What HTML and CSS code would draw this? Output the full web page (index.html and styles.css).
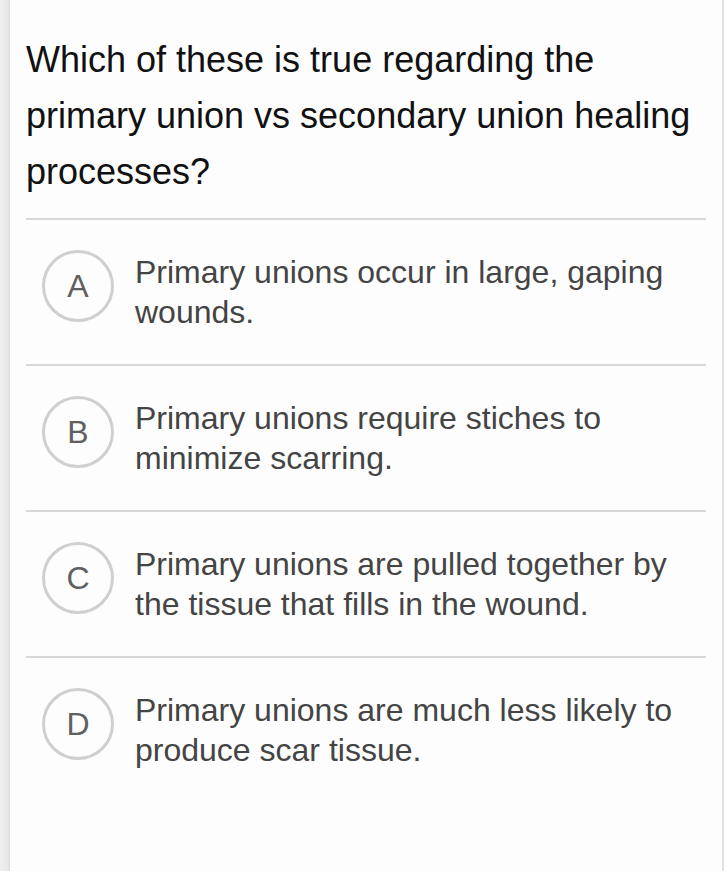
FILE: index.html
```html
<!DOCTYPE html>
<html lang="en">
<head>
<meta charset="utf-8">
<title>Question</title>
<link rel="stylesheet" href="styles.css">
</head>
<body>
<main class="page">
  <h1 class="question">Which of these is true regarding the primary union vs secondary union healing processes?</h1>
  <ul class="options">
    <li class="option">
      <span class="badge">A</span>
      <span class="answer">Primary unions occur in large, gaping wounds.</span>
    </li>
    <li class="option">
      <span class="badge">B</span>
      <span class="answer">Primary unions require stiches to minimize scarring.</span>
    </li>
    <li class="option">
      <span class="badge">C</span>
      <span class="answer">Primary unions are pulled together by the tissue that fills in the wound.</span>
    </li>
    <li class="option">
      <span class="badge">D</span>
      <span class="answer">Primary unions are much less likely to produce scar tissue.</span>
    </li>
  </ul>
</main>
</body>
</html>
```

FILE: styles.css
```css
html, body {
  margin: 0;
  padding: 0;
}

body {
  min-height: 100vh;
  font-family: "Liberation Sans", Arial, Helvetica, sans-serif;
  background: linear-gradient(to right,
    #efefef 0,
    #e6e6e6 8px,
    #dcdcdc 10px,
    #fdfdfd 10px,
    #fdfdfd calc(100% - 2px),
    #e2e2e2 calc(100% - 2px));
}

.page {
  padding: 32px 18px 0 26px;
}

.question {
  margin: 0;
  padding-bottom: 18px;
  font-size: 36px;
  line-height: 56px;
  font-weight: normal;
  color: #111;
}

.options {
  list-style: none;
  margin: 0;
  padding: 0;
}

.option {
  display: flex;
  align-items: flex-start;
  gap: 21px;
  padding: 32px 0 32px 16px;
  border-top: 2px solid #d8d8d8;
}

.badge {
  flex: none;
  box-sizing: border-box;
  width: 72px;
  height: 72px;
  margin-top: -2px;
  border: 3px solid #cfcfcf;
  border-radius: 50%;
  display: flex;
  align-items: center;
  justify-content: center;
  font-size: 32px;
  color: #606060;
}

.answer {
  font-size: 32px;
  line-height: 40px;
  color: #444;
}
```
